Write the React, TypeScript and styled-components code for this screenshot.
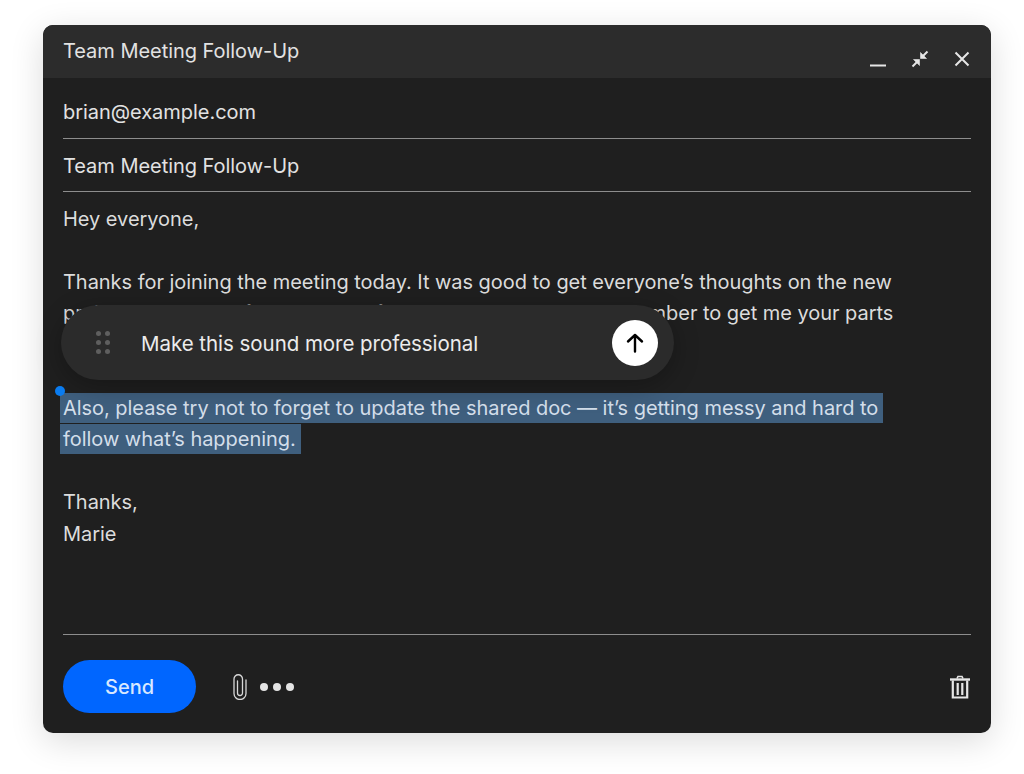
import React from "react";
import styled, { createGlobalStyle } from "styled-components";

const Global = createGlobalStyle`
  html, body { margin: 0; padding: 0; background: #fff; }
  body { font-family: Inter, "Liberation Sans", sans-serif; letter-spacing: -0.04px; font-weight: 420; }
`;

const Page = styled.div`
  width: 1024px;
  height: 774px;
  padding: 25px 33px 41px 43px;
  box-sizing: border-box;
  overflow: hidden;
`;

const Window = styled.div`
  position: relative;
  width: 948px;
  height: 708px;
  display: flex;
  flex-direction: column;
  background: #1f1f1f;
  border-radius: 10px;
  box-shadow: 0 8px 34px rgba(0, 0, 0, 0.14);
`;

const TitleBar = styled.header`
  height: 53px;
  flex: none;
  display: flex;
  justify-content: space-between;
  padding: 0 20px;
  background: #2c2c2c;
  border-radius: 10px 10px 0 0;
  box-sizing: border-box;
`;

const Title = styled.div`
  font-size: 20px;
  line-height: 53px;
  color: #e2e2e2;
`;

const WindowControls = styled.div`
  display: flex;
  align-items: center;
  gap: 25px;
  padding-top: 14px;
  margin-right: 1px;
  box-sizing: border-box;
`;

const Icon = styled.svg`
  display: block;
  flex: none;
`;

const Field = styled.div<{ $height: number; $pad: number }>`
  margin: 0 20px;
  height: ${(p) => p.$height}px;
  flex: none;
  box-sizing: border-box;
  border-bottom: 1px solid #8d8d8d;
  display: flex;
  align-items: flex-end;
  padding-bottom: ${(p) => p.$pad}px;
  font-size: 20px;
  line-height: 32px;
  color: #e2e2e2;
`;

const Body = styled.div`
  flex: 1;
  padding: 11.5px 20px 0;
  font-size: 20px;
  line-height: 31.5px;
  color: #dcdcdc;
`;

const Paragraph = styled.p<{ $lines?: number }>`
  margin: 0 0 ${(p) => (p.$lines ?? 1) * 31.5}px;
  width: 840px;
`;

const Selected = styled.span`
  background: #3f5f7e;
  color: #d3deea;
  padding: 3px 5px 3px 3px;
  margin-left: -3px;
  -webkit-box-decoration-break: clone;
  box-decoration-break: clone;
`;

const Footer = styled.footer`
  flex: none;
  margin: 0 20px;
  height: 99px;
  box-sizing: border-box;
  border-top: 1px solid #8d8d8d;
  display: flex;
  align-items: center;
  padding-top: 4px;
`;

const SendButton = styled.button`
  width: 133px;
  height: 53px;
  border: 0;
  border-radius: 27px;
  padding: 2px 0 0;
  background: #0066ff;
  color: #d8e8ff;
  font: 500 20px Inter, "Liberation Sans", sans-serif;
  letter-spacing: -0.04px;
  margin-right: 36px;
`;

const Tools = styled.div`
  display: flex;
  align-items: center;
  gap: 12px;
  flex: 1;
  padding-top: 2px;
`;

const Dots = styled.div`
  display: flex;
  gap: 5px;
`;

const Dot = styled.span`
  width: 8px;
  height: 8px;
  border-radius: 50%;
  background: #e4e4e4;
`;

const TrashIcon = styled(Icon)`
  margin-top: 2px;
`;

const PromptBar = styled.div`
  position: absolute;
  left: 18px;
  top: 280px;
  width: 613px;
  height: 75px;
  border-radius: 38px;
  background: #2b2b2b;
  box-shadow: 0 6px 26px rgba(0, 0, 0, 0.28);
  display: flex;
  align-items: center;
  padding: 0 16px 0 35px;
  box-sizing: border-box;
`;

const Grip = styled.div`
  display: grid;
  grid-template-columns: 5px 5px;
  gap: 4px 4px;
  margin-right: 31px;
`;

const GripDot = styled.span`
  width: 5px;
  height: 5px;
  border-radius: 50%;
  background: #5f5f5f;
`;

const PromptText = styled.div`
  flex: 1;
  padding-top: 1px;
  font-size: 20.5px;
  color: #ececec;
`;

const Submit = styled.button`
  width: 46px;
  height: 46px;
  border-radius: 50%;
  border: 0;
  padding: 0;
  background: #fff;
  display: flex;
  align-items: center;
  justify-content: center;
`;

const Handle = styled.span`
  position: absolute;
  left: 12px;
  top: 361px;
  width: 10px;
  height: 10px;
  border-radius: 50%;
  background: #0a7cf0;
`;

export default function App() {
  return (
    <Page>
      <Global />
      <Window>
        <TitleBar>
          <Title>Team Meeting Follow-Up</Title>
          <WindowControls>
            <Icon width="16" height="16" viewBox="0 0 16 16">
              <path d="M0 14.5h16" stroke="#e6e6e6" strokeWidth="2" />
            </Icon>
            <Icon width="18" height="18" viewBox="0 0 18 18" fill="#e6e6e6" stroke="#e6e6e6">
              <path d="M16.5 1.5 11.5 6.5" strokeWidth="2" />
              <path d="M9.5 2.5V8.5h6z" strokeWidth="0.6" />
              <path d="M1.5 16.5 6.5 11.5" strokeWidth="2" />
              <path d="M2.5 9.5H8.5v6z" strokeWidth="0.6" />
            </Icon>
            <Icon width="16" height="16" viewBox="0 0 16 16" fill="none" stroke="#e6e6e6" strokeWidth="2">
              <path d="M1.5 1.5l13 13M14.5 1.5l-13 13" />
            </Icon>
          </WindowControls>
        </TitleBar>
        <Field $height={61} $pad={10}>brian@example.com</Field>
        <Field $height={53} $pad={9}>Team Meeting Follow-Up</Field>
        <Body>
          <Paragraph>Hey everyone,</Paragraph>
          <Paragraph $lines={2}>
            Thanks for joining the meeting today. It was good to get everyone’s thoughts on the new
            project timeline. Before the end of this week, please also remember to get me your parts
          </Paragraph>
          <Paragraph>
            <Selected>
              Also, please try not to forget to update the shared doc — it’s getting messy and hard to
              follow what’s happening.
            </Selected>
          </Paragraph>
          <Paragraph>
            Thanks,
            <br />
            Marie
          </Paragraph>
        </Body>
        <Footer>
          <SendButton>Send</SendButton>
          <Tools>
            <Icon width="16" height="26" viewBox="0 0 16 26" fill="none" stroke="#d8d8d8" strokeWidth="1.3" strokeLinecap="round">
              <path d="M5.5 7v12a2.5 2.5 0 0 0 5 0V5a4.25 4.25 0 0 0-8.5 0v14.5a6 6 0 0 0 12 0V6" />
            </Icon>
            <Dots>
              <Dot />
              <Dot />
              <Dot />
            </Dots>
          </Tools>
          <TrashIcon width="22" height="24" viewBox="0 0 22 24" fill="none" stroke="#e6e6e6">
            <path d="M1 4.5h20" strokeWidth="2.4" />
            <path d="M8 3.5 9 1.5h4l1 2" strokeWidth="1.6" />
            <path d="M3.8 5.5v17h14.4v-17" strokeWidth="2.2" />
            <path d="M8.7 8v12M13.3 8v12" strokeWidth="2.2" />
          </TrashIcon>
        </Footer>
        <PromptBar>
          <Grip>
            {Array.from({ length: 6 }, (_, i) => (
              <GripDot key={i} />
            ))}
          </Grip>
          <PromptText>Make this sound more professional</PromptText>
          <Submit aria-label="Submit">
            <Icon width="22" height="22" viewBox="0 0 22 22" fill="none" stroke="#000" strokeWidth="2.4" strokeLinecap="round" strokeLinejoin="round">
              <path d="M11 19.5V3M4 9.5 11 3l7 6.5" />
            </Icon>
          </Submit>
        </PromptBar>
        <Handle />
      </Window>
    </Page>
  );
}
